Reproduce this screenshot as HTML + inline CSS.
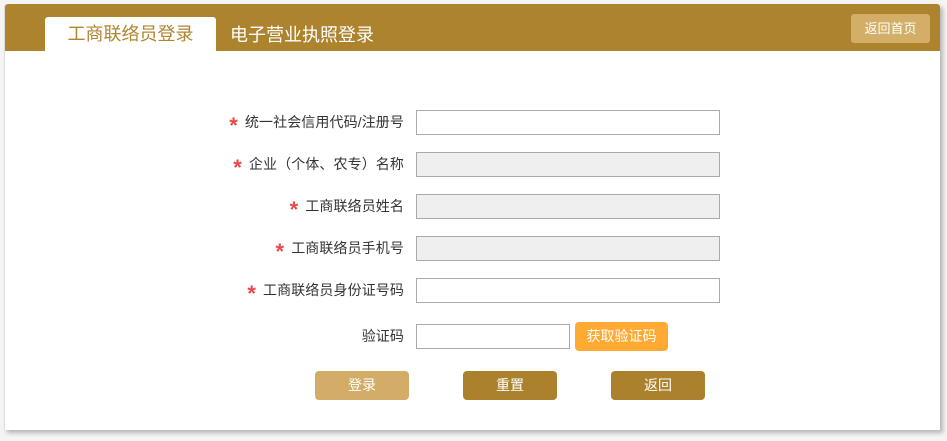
<!DOCTYPE html>
<html><head><meta charset="utf-8"><style>
*{margin:0;padding:0;box-sizing:border-box}
body{width:947px;height:441px;background:#f4f4f4;font-family:"Liberation Sans","Noto Sans CJK SC",sans-serif;position:relative;overflow:hidden}
.panel{position:absolute;left:4px;top:4px;width:936px;height:426px;background:#fff;border-left:1px solid #ddd;border-radius:3px 3px 0 0;box-shadow:3px 3px 4px rgba(0,0,0,0.25)}
.head{position:absolute;left:0;top:0;width:100%;height:47px;background:#ad832e;border-radius:3px 3px 0 0}
.tab{position:absolute;left:40px;top:13px;width:171px;height:34px;background:#fff;border-radius:3px 3px 0 0;color:#b0852e;font-size:18px;line-height:34px;text-align:center}
.tab2{position:absolute;left:225px;top:13px;color:#fff;font-size:18px;line-height:36px}
.home{position:absolute;left:846px;top:10px;width:79px;height:29px;background:#d3ae67;border-radius:3px;color:#fff;font-size:13px;line-height:29px;text-align:center}
.lbl{position:absolute;right:543px;font-size:14px;color:#333;line-height:24px;white-space:nowrap;letter-spacing:0.1px}
.lbl b{color:#e84a4a;font-size:22px;font-weight:bold;margin-right:7px;vertical-align:-6px;line-height:10px}
.inp{position:absolute;left:416px;width:304px;height:25px;border:1px solid #aaa;background:#fff}
.g{background:#efefef}
.btn{position:absolute;top:371px;width:94px;height:29px;border-radius:4px;color:#fff;font-size:14px;line-height:29px;text-align:center;background:#ab812e}
</style></head><body>
<div class="panel"><div class="head"><div class="tab">工商联络员登录</div><div class="tab2">电子营业执照登录</div><div class="home">返回首页</div></div></div>
<div class="lbl" style="top:110px"><b>*</b>统一社会信用代码/注册号</div><div class="inp" style="top:110px"></div>
<div class="lbl" style="top:152px"><b>*</b>企业（个体、农专）名称</div><div class="inp g" style="top:152px"></div>
<div class="lbl" style="top:194px"><b>*</b>工商联络员姓名</div><div class="inp g" style="top:194px"></div>
<div class="lbl" style="top:236px"><b>*</b>工商联络员手机号</div><div class="inp g" style="top:236px"></div>
<div class="lbl" style="top:278px"><b>*</b>工商联络员身份证号码</div><div class="inp" style="top:278px"></div>
<div class="lbl" style="top:324px">验证码</div><div class="inp" style="top:324px;width:154px"></div>
<div style="position:absolute;left:575px;top:322px;width:93px;height:29px;background:#ffaa33;border-radius:4px;color:#fff;font-size:14px;line-height:29px;text-align:center">获取验证码</div>
<div class="btn" style="left:315px;background:#d3ac67">登录</div>
<div class="btn" style="left:463px">重置</div>
<div class="btn" style="left:611px">返回</div>
</body></html>
